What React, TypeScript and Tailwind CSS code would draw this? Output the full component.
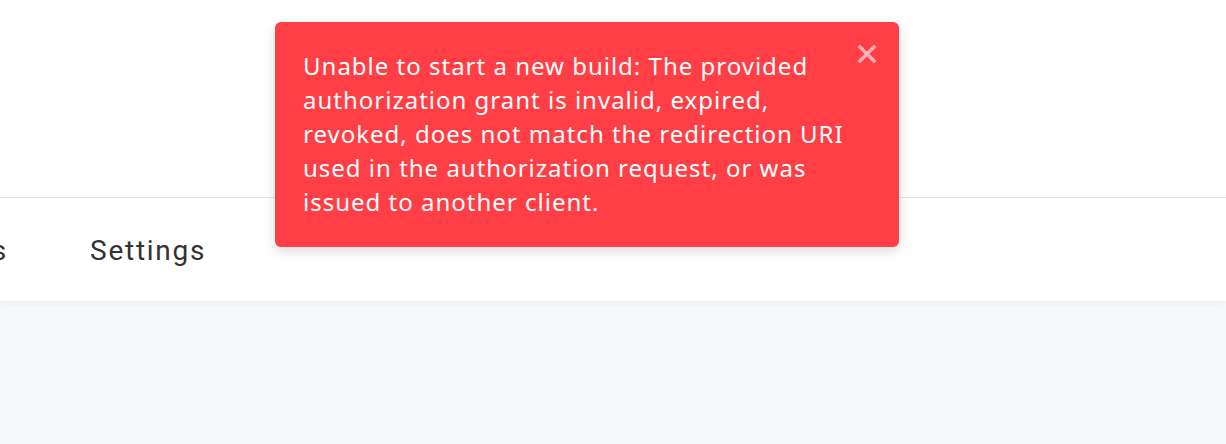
import React from "react";

export default function App() {
  return (
    <div className="relative w-[1226px] h-[444px] overflow-hidden bg-[#f7f8fa] font-['Roboto',sans-serif]">
      <div className="h-[198px] bg-white border-b border-[#e4e5e7]" />
      <div className="h-[103px] bg-white shadow-[0_2px_6px_rgba(0,0,0,0.05)] flex items-center pt-[3px]">
        <div className="flex items-center gap-[82px] text-[28px] tracking-[1.75px] text-[#333333]">
          <div className="w-[8px] flex justify-end">
            <span className="whitespace-nowrap">Jobs</span>
          </div>
          <span>Settings</span>
        </div>
      </div>
      <div className="absolute left-[275px] top-[22px] w-[624px] rounded-[6px] bg-[#ff3e46] shadow-[0_4px_12px_rgba(0,0,0,0.15)] pl-[28px] pr-[48px] pt-[27px] pb-[28px]">
        <p className="font-['Noto_Sans',sans-serif] text-[24px] leading-[34px] tracking-[1px] text-white">
          Unable to start a new build: The provided authorization grant is invalid, expired, revoked, does not match the redirection URI used in the authorization request, or was issued to another client.
        </p>
        <button className="absolute right-[20px] top-[20px] w-[24px] h-[24px] flex items-center justify-center text-white/60">
          <svg width="22" height="22" viewBox="0 0 22 22" fill="none" stroke="currentColor" strokeWidth="3.5" strokeLinecap="square">
            <path d="M4 4L18 18M18 4L4 18" />
          </svg>
        </button>
      </div>
    </div>
  );
}
